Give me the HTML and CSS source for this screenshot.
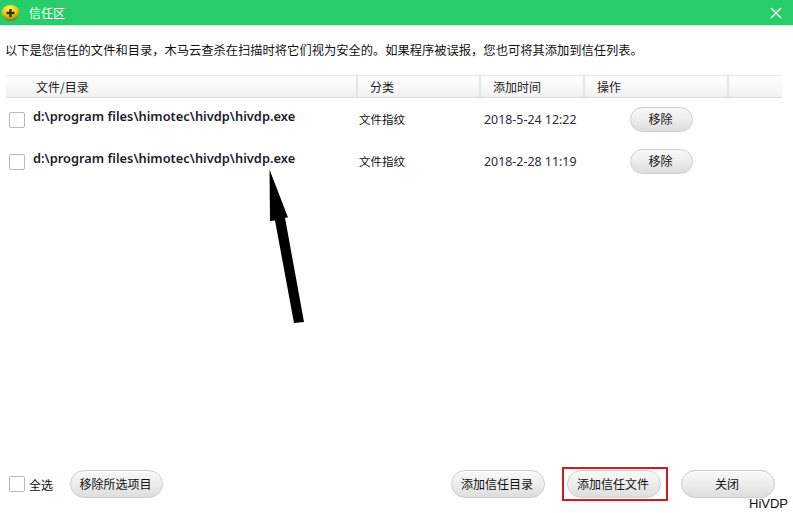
FILE: index.html
```html
<!DOCTYPE html>
<html lang="zh">
<head>
<meta charset="utf-8">
<title>信任区</title>
<link rel="stylesheet" href="styles.css">
</head>
<body>
<div class="window">
  <header class="titlebar">
    <svg class="logo" width="20" height="20" viewBox="0 0 20 20">
      <defs>
        <radialGradient id="ball" cx="45%" cy="22%" r="80%">
          <stop offset="0" stop-color="#fff65a"/>
          <stop offset="0.55" stop-color="#e6c814"/>
          <stop offset="1" stop-color="#5f7a12"/>
        </radialGradient>
      </defs>
      <ellipse cx="10.5" cy="10" rx="9" ry="8" fill="url(#ball)"/>
      <path d="M10.5 6v8M6.5 10h8" stroke="#34300f" stroke-width="2.4"/>
    </svg>
    <span class="title">信任区</span>
    <svg class="close" width="12" height="12" viewBox="0 0 12 12">
      <path d="M1 1l10 10M11 1L1 11" stroke="#fff" stroke-width="1.4" fill="none"/>
    </svg>
  </header>
  <p class="intro">以下是您信任的文件和目录，木马云查杀在扫描时将它们视为安全的。如果程序被误报，您也可将其添加到信任列表。</p>
  <div class="table">
    <div class="row head">
      <div class="cell first">文件/目录</div>
      <div class="cell">分类</div>
      <div class="cell">添加时间</div>
      <div class="cell">操作</div>
      <div class="cell"></div>
    </div>
    <div class="row item">
      <div class="path"><span class="check"></span><span class="name">d:\program files\himotec\hivdp\hivdp.exe</span></div>
      <div class="kind">文件指纹</div>
      <div class="date">2018-5-24 12:22</div>
      <div class="act"><button class="btn small">移除</button></div>
    </div>
    <div class="row item">
      <div class="path"><span class="check"></span><span class="name">d:\program files\himotec\hivdp\hivdp.exe</span></div>
      <div class="kind">文件指纹</div>
      <div class="date">2018-2-28 11:19</div>
      <div class="act"><button class="btn small">移除</button></div>
    </div>
  </div>
  <footer class="footer">
    <span class="check"></span>
    <span class="all">全选</span>
    <button class="btn remove">移除所选项目</button>
    <span class="push"></span>
    <button class="btn wide">添加信任目录</button>
    <span class="mark"><button class="btn wide">添加信任文件</button></span>
    <button class="btn wide">关闭</button>
  </footer>
  <svg class="arrow" width="793" height="513" viewBox="0 0 793 513">
    <path d="M269.5 169.5L288 217.5L285 217.7L304 322L294 323L275 220.5L270 221Z" fill="#000"/>
  </svg>
  <span class="brand">HiVDP</span>
</div>
</body>
</html>
```
FILE: styles.css
```css
* { box-sizing: border-box; }
html, body { margin: 0; padding: 0; }
body { background: #fff; font-family: "Noto Sans CJK SC", "Liberation Sans", sans-serif; color: #111; }
.window { position: relative; width: 793px; height: 513px; overflow: hidden; display: flex; flex-direction: column; background: #fff; }
.titlebar { height: 25px; flex: none; background: #26cd69; display: flex; align-items: center; padding: 0 11px 0 0; color: #fff; font-size: 12px; }
.logo { flex: none; }
.title { margin-left: 9px; flex: 1; line-height: 20px; }
.close { flex: none; }
.intro { margin: 16px 0 0 5px; height: 18px; font-size: 12.28px; line-height: 18px; white-space: nowrap; color: #111; }
.table { margin: 16px 11px 0 6px; flex: none; }
.row { display: grid; grid-template-columns: 352px 123px 104px 144px 53px; }
.head { height: 23px; border-top: 1px solid #e6e6e6; border-bottom: 1px solid #dcdcdc; background: linear-gradient(#ffffff, #f7f7f7 60%, #f1f1f1); font-size: 12px; color: #222; }
.cell { padding-left: 12px; line-height: 21px; border-right: 2px solid #e4e4e4; }
.cell:last-child { border-right: 0; }
.first { padding-left: 30px; }
.item { height: 42px; align-items: center; font-size: 11.5px; }
.path { display: flex; align-items: center; padding-left: 3px; }
.path .name { margin-left: 8px; margin-top: -7px; font-family: "Noto Sans", sans-serif; font-weight: 600; font-size: 12.85px; color: #1c1c28; white-space: nowrap; }
.check { flex: none; width: 16px; height: 16px; border: 1px solid #b9b9b9; border-radius: 2px; background: #fff; margin-top: 1px; }
.kind { padding-left: 1px; }
.date { padding-left: 3px; font-family: "Noto Sans", sans-serif; font-size: 12.4px; color: #2c2c3a; }
.act { padding-left: 45px; }
.btn { display: block; padding: 0 2px 1px 0; margin: 0; border: 1px solid #cfcfcf; background: linear-gradient(#f9f9f9, #ebebeb 55%, #dddddd); font-family: inherit; font-size: 12px; color: #111; text-align: center; line-height: 1; }
.small { width: 63px; height: 25px; border-radius: 12.5px; }
.footer { position: absolute; left: 9px; right: 18px; top: 467px; height: 34px; display: flex; align-items: center; font-size: 12px; }
.footer .check { margin-top: 0; }
.all { margin-left: 4px; }
.remove { margin-left: 17px; width: 93px; height: 28px; border-radius: 14px; }
.push { flex: 1; }
.wide { width: 94px; height: 28px; border-radius: 14px; }
.mark { margin-left: 17px; padding: 1px 5px 1px 3px; height: 34px; width: 106px; border: 2px solid #d01c1f; display: flex; align-items: center; }
.footer .mark + .wide { margin-left: 13px; }
.arrow { position: absolute; left: 0; top: 0; pointer-events: none; }
.brand { position: absolute; left: 749px; top: 496px; font-family: "Liberation Sans", sans-serif; font-size: 13px; line-height: 15px; color: #111; }
```
